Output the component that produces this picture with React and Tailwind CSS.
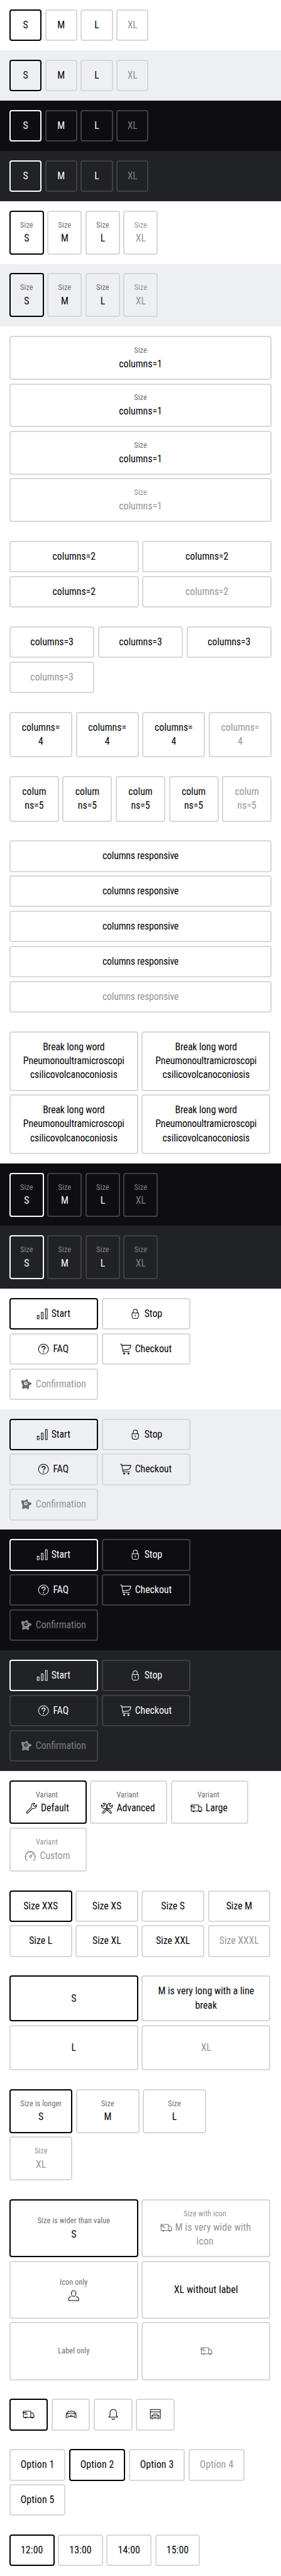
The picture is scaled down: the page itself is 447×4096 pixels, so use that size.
import React from 'react';
import { clsx } from 'clsx';

/* ---------- icons (24 unit grid) ---------- */

const WRENCH =
  'M3.7 18.5 11.9 10.3C10.8 7.2 12.6 4 15.6 3.5c.8-.1 1.5 0 2.1.2L15.3 6.2l.5 2.1 2.1.5 2.4-2.4c.8 2.6-.9 5.4-3.9 6-.9.2-1.9.1-2.6-.2L5.6 20.4c-1.3 1.3-3.2-.6-1.9-1.9z';

const CAR =
  'M3.5 17.2v-4.6l1.3-2.1 1.6-3 1.4-.9c2.6-.6 5.8-.6 8.4 0l1.4.9 1.6 3 1.3 2.1v4.6h-2.6l-.8-1.6H6.9l-.8 1.6zM3 9.3l1.8 1c4.6-.7 9.8-.7 14.4 0L21 9.3M5 13h2.6M16.4 13H19M9.5 13.7h5';

const ICONS = {
  chart: <path d="M3.5 14.5h3v6h-3zM10.5 9.5h3v11h-3zM17.5 3.5h3v17h-3z" />,
  lock: (
    <>
      <path d="M6.5 10.5h11v5.500a4 4 0 0 1-4 4h-3a4 4 0 0 1-4-4z" />
      <path d="M8.5 10.5V7.500a3.500 3.500 0 0 1 7 0v3M12 13.300v3" />
    </>
  ),
  question: (
    <>
      <circle cx="12" cy="12" r="8.5" />
      <path strokeWidth="1.5" d="M9.2 9.8c.1-3.4 5.700-3.300 5.600 0 0 2.100-2.700 2.100-2.700 4.300" />
      <circle cx="12" cy="16.7" r="1" fill="currentColor" stroke="none" />
    </>
  ),
  cart: (
    <>
      <path d="M2.5 3.5h2.400L7.200 16.500h11.500M5.300 5.500h15.200c0 4.600-1.400 6.500-5 7l-8.600.9" />
      <circle cx="9.2" cy="19.6" r="1.5" fill="currentColor" stroke="none" />
      <circle cx="16.5" cy="19.6" r="1.5" fill="currentColor" stroke="none" />
    </>
  ),
  flower: (
    <path
      fill="currentColor"
      stroke="none"
      fillRule="evenodd"
      d="M3.4 5.5c1.300-1.300 3.200-.2 5 .3 1.100-.4 2.200-2.500 4-2.700 1.900 0 2.100 2.900 2.700 4.500 1.800.8 5.100 1 5.500 2.900.1 2.100-3.100 2.700-4.300 3.700-.3 1.900.7 4.900-1.200 5.900-2 .4-3-1.700-4.500-2-1.600.5-3.900 2.500-5.500 1.300-1.400-1.500.2-3.700.3-5.600C4.500 11.900 2.400 8 3.400 5.500zM9 8.200c-1 .9-1.500 2.600-.8 3.800.8 1.300 2.900 1.800 4.300 1 1.500-.9 1.700-3 .7-4.300-.9-1.200-3.100-1.500-4.200-.5zM10 9.500l1.700-.3 1.200 1.600-1.300 1.200-1-1-1.200.6z"
    />
  ),
  wrench: <path d={WRENCH} />,
  wrenches: (
    <>
      <path transform="matrix(-1 0 0 1 23 0)" d={WRENCH} />
      <path transform="translate(1 0)" d={WRENCH} />
    </>
  ),
  truck: (
    <>
      <path d="M3.5 6.5H16v10.500H3.500zM16 9.500h3l1.700 1.300.8 3V17H16M2 9h7M5.500 11.500H11" />
      <path fill="currentColor" d="M6.2 17h2.400l-1.200 1.200zM17.300 17h2.400l-1.200 1.200z" />
    </>
  ),
  gauge: (
    <>
      <path d="M7 18.8l-1.800.3C2.400 15 3 9.500 6.300 6.600c3.300-2.900 8.100-2.900 11.400 0 3.300 2.900 3.900 8.400 1.100 12.500l-1.800-.3M3.600 13h2M18.400 13h2M6.300 6.600l1.500 1.700M12 4.500v2M20 9l-1.600.8M4 9l1.600.8M17 7.500l-3.600 4.200" />
      <circle cx="12.3" cy="12.9" r="1.7" />
    </>
  ),
  user: (
    <>
      <ellipse cx="12" cy="8.3" rx="3.9" ry="5" />
      <path d="M8 13.5c-3 .7-4.500 2-4.500 4.800v2.200h17v-2.200c0-2.800-1.500-4.100-4.500-4.800" />
    </>
  ),
  car: <path d={CAR} />,
  bell: <path d="M4.5 16.5h15l-2-2.700V9c0-3.500-2-5.500-5.500-5.500S6.500 5.500 6.500 9v4.800zM9.500 18.800c.6 2.200 4.400 2.200 5 0" />,
  garage: (
    <>
      <path d="M3.5 20V3.500h17V20M3.500 7.500h17" />
      <path strokeWidth="1.3" transform="translate(3.2 6.2) scale(.73 .78)" d={CAR} />
    </>
  ),
};

function Icon({ name, className }) {
  return (
    <svg
      viewBox="0 0 24 24"
      fill="none"
      stroke="currentColor"
      strokeWidth="1.1"
      className={clsx('size-[22.33px] shrink-0', className)}
    >
      {ICONS[name]}
    </svg>
  );
}

/* ---------- themes ---------- */

const LIGHT = {
  text: 'text-[#010205]',
  label: 'text-[#6b6d70]',
  off: 'text-[#949598]',
  offIcon: 'text-[#6b6d70]',
  border: 'border-[#d8d8db]',
  selected: 'border-[#010205]',
};
const DARK = {
  text: 'text-[#fbfcff]',
  label: 'text-[#88898c]',
  off: 'text-[#7c7d81]',
  offIcon: 'text-[#88898c]',
  border: 'border-[#404044]',
  selected: 'border-[#fbfcff]',
};
const THEMES = {
  white: { ...LIGHT, bg: 'bg-white' },
  surface: { ...LIGHT, bg: 'bg-[#eeeff2]' },
  black: { ...DARK, bg: 'bg-[#0e0e12]' },
  dark: { ...DARK, bg: 'bg-[#212225]' },
};

/* ---------- tile ---------- */

function Tile({ theme, item, tracking }) {
  const { label, lines = [], icon, selected, disabled } = item;
  const shifted = icon && lines.length > 0;
  return (
    <button
      type="button"
      disabled={disabled}
      className={clsx(
        'flex min-h-[50.25px] flex-col items-center justify-center rounded-[4px] border-2 py-[11.96px] text-center',
        shifted && 'pr-[3.7px]',
        selected ? theme.selected : theme.border,
      )}
    >
      {label && (
        <span
          className={clsx(
            'block whitespace-nowrap text-[12.2px] leading-[19.63px] tracking-[0.01em]',
            disabled ? theme.off : theme.label,
          )}
        >
          {label}
        </span>
      )}
      {(icon || lines.length > 0) && (
        <span
          className={clsx(
            'block whitespace-nowrap text-[15.75px] leading-[22.33px]',
            tracking,
            disabled ? theme.off : theme.text,
          )}
        >
          <span className="flex items-center justify-center gap-[3.7px]">
            {icon && <Icon name={icon} className={disabled ? theme.offIcon : theme.text} />}
            {lines[0]}
          </span>
          {lines.slice(1).map((line) => (
            <span key={line} className="block">
              {line}
            </span>
          ))}
        </span>
      )}
    </button>
  );
}

function Section({ theme = 'white', cols, items, rows, tracking = 'tracking-normal' }) {
  const t = THEMES[theme];
  return (
    <section className={clsx('px-[14.9px] py-[14.89px]', t.bg)}>
      <div className={clsx('grid gap-x-[5.59px] gap-y-[5.58px]', cols, rows)}>
        {items.map((item, i) => (
          <Tile key={i} theme={t} item={item} tracking={tracking} />
        ))}
      </div>
    </section>
  );
}

/* ---------- data ---------- */

const sizes = [
  { lines: ['S'], selected: true },
  { lines: ['M'] },
  { lines: ['L'] },
  { lines: ['XL'], disabled: true },
];
const labelled = sizes.map((s) => ({ ...s, label: 'Size' }));
const repeat = (n, lines, label) =>
  Array.from({ length: n }, (_, i) => ({ lines, label, disabled: i === n - 1 }));

const actions = [
  { icon: 'chart', lines: ['Start'], selected: true },
  { icon: 'lock', lines: ['Stop'] },
  { icon: 'question', lines: ['FAQ'] },
  { icon: 'cart', lines: ['Checkout'] },
  { icon: 'flower', lines: ['Confirmation'], disabled: true },
];
const variants = [
  { label: 'Variant', icon: 'wrench', lines: ['Default'], selected: true },
  { label: 'Variant', icon: 'wrenches', lines: ['Advanced'] },
  { label: 'Variant', icon: 'truck', lines: ['Large'] },
  { label: 'Variant', icon: 'gauge', lines: ['Custom'], disabled: true },
];
const allSizes = ['XXS', 'XS', 'S', 'M', 'L', 'XL', 'XXL', 'XXXL'].map((s) => ({
  lines: ['Size ' + s],
  selected: s === 'XXS',
  disabled: s === 'XXXL',
}));
const longWord = Array.from({ length: 4 }, () => ({
  lines: ['Break long word', 'Pneumonoultramicroscopi', 'csilicovolcanoconiosis'],
}));
const longLine = [
  { lines: ['S'], selected: true },
  { lines: ['M is very long with a line', 'break'] },
  { lines: ['L'] },
  { lines: ['XL'], disabled: true },
];
const longerLabel = [{ ...labelled[0], label: 'Size is longer' }, ...labelled.slice(1)];
const mixed = [
  { label: 'Size is wider than value', lines: ['S'], selected: true },
  { label: 'Size with icon', icon: 'truck', lines: ['M is very wide with', 'icon'], disabled: true },
  { label: 'Icon only', icon: 'user' },
  { lines: ['XL without label'] },
  { label: 'Label only' },
  { icon: 'truck', disabled: true },
];
const iconsOnly = [{ icon: 'truck', selected: true }, { icon: 'car' }, { icon: 'bell' }, { icon: 'garage' }];
const options = [1, 2, 3, 4, 5].map((n) => ({
  lines: ['Option ' + n],
  selected: n === 2,
  disabled: n === 4,
}));
const times = [12, 13, 14, 15].map((h) => ({ lines: [h + ':00'], selected: h === 12 }));

const xs = 'grid-cols-[repeat(4,51.2px)]';
const sm = 'grid-cols-[repeat(4,54.95px)]';
const lg = 'grid-cols-[repeat(2,141.5px)]';
const half = 'grid-cols-[repeat(2,204.9px)]';

export default function App() {
  return (
    <main className="min-h-[4096px] w-full bg-white font-[Roboto,sans-serif] font-stretch-[75%]">
      <Section theme="white" cols={xs} items={sizes} />
      <Section theme="surface" cols={xs} items={sizes} />
      <Section theme="black" cols={xs} items={sizes} />
      <Section theme="dark" cols={xs} items={sizes} />
      <Section theme="white" cols={sm} items={labelled} />
      <Section theme="surface" cols={sm} items={labelled} />
      <Section cols="grid-cols-1" items={repeat(4, ['columns=1'], 'Size')} />
      <Section cols="grid-cols-2" items={repeat(4, ['columns=2'])} />
      <Section cols="grid-cols-3" items={repeat(4, ['columns=3'])} />
      <Section cols="grid-cols-4" items={repeat(4, ['columns=', '4'])} />
      <Section cols="grid-cols-5" items={repeat(5, ['colum', 'ns=5'])} />
      <Section cols="grid-cols-1" items={repeat(5, ['columns responsive'])} tracking="tracking-[-0.01em]" />
      <Section cols={half} items={longWord} tracking="tracking-[-0.007em]" />
      <Section theme="black" cols={sm} items={labelled} />
      <Section theme="dark" cols={sm} items={labelled} />
      <Section theme="white" cols={lg} items={actions} />
      <Section theme="surface" cols={lg} items={actions} />
      <Section theme="black" cols={lg} items={actions} />
      <Section theme="dark" cols={lg} items={actions} />
      <Section cols="grid-cols-[repeat(3,122.9px)]" items={variants} />
      <Section cols="grid-cols-[repeat(4,99.65px)]" items={allSizes} />
      <Section cols={half} rows="auto-rows-fr" items={longLine} />
      <Section cols="grid-cols-[repeat(3,100.6px)]" items={longerLabel} />
      <Section cols={half} rows="auto-rows-fr" items={mixed} tracking="tracking-[0.01em]" />
      <Section cols="grid-cols-[repeat(4,61.5px)]" items={iconsOnly} />
      <Section cols="grid-cols-[repeat(4,89.4px)]" items={options} tracking="tracking-[0.01em]" />
      <Section cols="grid-cols-[repeat(4,71.7px)]" items={times} tracking="tracking-[0.01em]" />
    </main>
  );
}
